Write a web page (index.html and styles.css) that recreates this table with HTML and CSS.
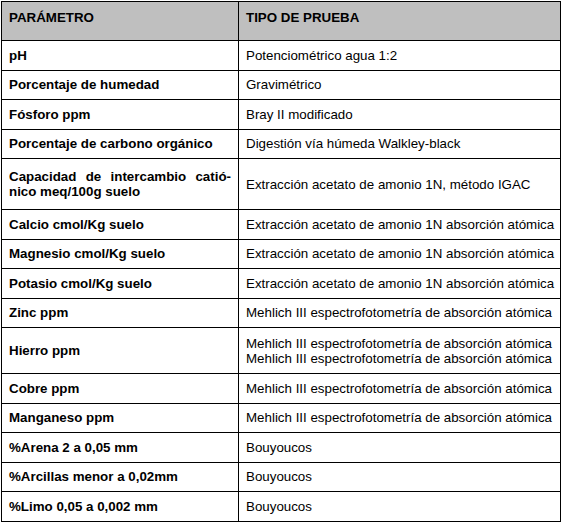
FILE: index.html
```html
<!DOCTYPE html>
<html lang="es">
<head>
<meta charset="utf-8">
<title>Parámetros</title>
<link rel="stylesheet" href="styles.css">
</head>
<body>
<table class="tabla">
  <colgroup>
    <col class="c1">
    <col class="c2">
  </colgroup>
  <thead>
    <tr class="hd">
      <th>PARÁMETRO</th>
      <th>TIPO DE PRUEBA</th>
    </tr>
  </thead>
  <tbody>
    <tr><td class="p">pH</td><td>Potenciométrico agua 1:2</td></tr>
    <tr><td class="p">Porcentaje de humedad</td><td>Gravimétrico</td></tr>
    <tr><td class="p">Fósforo ppm</td><td>Bray II modificado</td></tr>
    <tr><td class="p">Porcentaje de carbono orgánico</td><td>Digestión vía húmeda Walkley-black</td></tr>
    <tr class="tall"><td class="p"><span class="jl">Capacidad de intercambio catió-</span><span class="ln">nico meq/100g suelo</span></td><td>Extracción acetato de amonio 1N, método IGAC</td></tr>
    <tr><td class="p">Calcio cmol/Kg suelo</td><td>Extracción acetato de amonio 1N absorción atómica</td></tr>
    <tr><td class="p">Magnesio cmol/Kg suelo</td><td>Extracción acetato de amonio 1N absorción atómica</td></tr>
    <tr><td class="p">Potasio cmol/Kg suelo</td><td>Extracción acetato de amonio 1N absorción atómica</td></tr>
    <tr><td class="p">Zinc ppm</td><td>Mehlich III espectrofotometría de absorción atómica</td></tr>
    <tr class="dbl"><td class="p">Hierro ppm</td><td><span class="ln">Mehlich III espectrofotometría de absorción atómica</span><span class="ln">Mehlich III espectrofotometría de absorción atómica</span></td></tr>
    <tr><td class="p">Cobre ppm</td><td>Mehlich III espectrofotometría de absorción atómica</td></tr>
    <tr><td class="p">Manganeso ppm</td><td>Mehlich III espectrofotometría de absorción atómica</td></tr>
    <tr><td class="p">%Arena 2 a 0,05 mm</td><td>Bouyoucos</td></tr>
    <tr><td class="p">%Arcillas menor a 0,02mm</td><td>Bouyoucos</td></tr>
    <tr><td class="p">%Limo 0,05 a 0,002 mm</td><td>Bouyoucos</td></tr>
  </tbody>
</table>
</body>
</html>
```

FILE: styles.css
```css
html, body {
  margin: 0;
  padding: 0;
  background: #ffffff;
}

body {
  padding: 1px;
  font-family: "Liberation Sans", Arial, sans-serif;
  font-size: 13.33px;
  color: #000000;
}

.tabla {
  border-collapse: collapse;
  table-layout: fixed;
  width: 559px;
}

.c1 { width: 237px; }
.c2 { width: 322px; }

.tabla th,
.tabla td {
  border: 1px solid #000000;
  padding: 0 7px;
  line-height: 15px;
  text-align: left;
  white-space: nowrap;
}

.tabla th {
  background: #bfbfbf;
  font-weight: bold;
  vertical-align: top;
  padding-top: 8px;
}

.hd { height: 39px; }

.tabla td {
  vertical-align: middle;
  height: 29.5px;
  box-sizing: border-box;
}

.tabla td.p {
  font-weight: bold;
}

.tall td { height: 51px; }
.dbl td { height: 46px; }

.ln { display: block; }

.jl {
  display: block;
  text-align: justify;
  text-align-last: justify;
}
```
